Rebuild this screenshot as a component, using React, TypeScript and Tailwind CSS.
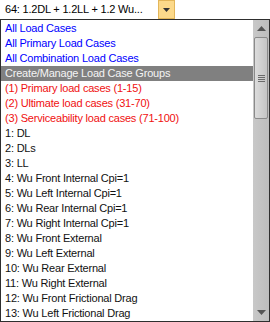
import React from "react";

const rows: { t: string; c: string; sel?: boolean }[] = [
  { t: "All Load Cases", c: "text-[#0000ff]" },
  { t: "All Primary Load Cases", c: "text-[#0000ff]" },
  { t: "All Combination Load Cases", c: "text-[#0000ff]" },
  { t: "Create/Manage Load Case Groups", c: "text-[#f4f4f4]", sel: true },
  { t: "(1) Primary load cases (1-15)", c: "text-[#f01010]" },
  { t: "(2) Ultimate load cases (31-70)", c: "text-[#f01010]" },
  { t: "(3) Serviceability load cases (71-100)", c: "text-[#f01010]" },
  { t: "1: DL", c: "text-[#111]" },
  { t: "2: DLs", c: "text-[#111]" },
  { t: "3: LL", c: "text-[#111]" },
  { t: "4: Wu Front Internal Cpi=1", c: "text-[#111]" },
  { t: "5: Wu Left Internal Cpi=1", c: "text-[#111]" },
  { t: "6: Wu Rear Internal Cpi=1", c: "text-[#111]" },
  { t: "7: Wu Right Internal Cpi=1", c: "text-[#111]" },
  { t: "8: Wu Front External", c: "text-[#111]" },
  { t: "9: Wu Left External", c: "text-[#111]" },
  { t: "10: Wu Rear External", c: "text-[#111]" },
  { t: "11: Wu Right External", c: "text-[#111]" },
  { t: "12: Wu Front Frictional Drag", c: "text-[#111]" },
  { t: "13: Wu Left Frictional Drag", c: "text-[#111]" },
];

export default function App() {
  return (
    <div
      className="w-[270px] h-[322px] bg-white flex flex-col text-[11px] tracking-[-0.2px]"
      style={{ fontFamily: '"Liberation Sans", Arial, sans-serif' }}
    >
      <div className="h-[19px] w-[175px] flex items-stretch">
        <div className="flex-1 flex items-center pl-[5px] text-black">64: 1.2DL + 1.2LL + 1.2 Wu...</div>
        <div className="w-[17px] bg-[#fcd98a] border border-[#e3b65a] flex items-center justify-center">
          <svg width="7" height="4" viewBox="0 0 7 4">
            <polygon points="0,0 7,0 3.5,4" fill="#333" />
          </svg>
        </div>
      </div>
      <div className="flex-1 flex border border-[#2e2e2e] min-h-0">
        <div className="flex-1 flex flex-col pt-[1px] overflow-hidden">
          {rows.map((r) => (
            <div
              key={r.t}
              className={`h-[15px] shrink-0 flex items-center pl-[4px] whitespace-nowrap ${r.c} ${r.sel ? "bg-[#808080]" : ""}`}
            >
              {r.t}
            </div>
          ))}
        </div>
        <div className="w-[16px] flex flex-col items-center bg-gradient-to-r from-[#c8c8c8] to-[#bdbdbd]">
          <div className="h-[17px] flex items-center justify-center">
            <svg width="9" height="5" viewBox="0 0 9 5">
              <polygon points="0,5 9,5 4.5,0" fill="#555" />
            </svg>
          </div>
          <div className="w-[14px] h-[82px] rounded-[2px] border border-[#8a8a8a] bg-gradient-to-r from-[#dcdcdc] to-[#c4c4c4] flex flex-col items-center justify-center gap-[1px]">
            <div className="w-[7px] h-[1px] bg-[#6a6a6a]" />
            <div className="w-[7px] h-[1px] bg-[#6a6a6a]" />
            <div className="w-[7px] h-[1px] bg-[#6a6a6a]" />
            <div className="w-[7px] h-[1px] bg-[#6a6a6a]" />
          </div>
          <div className="flex-1" />
          <div className="h-[17px] flex items-center justify-center">
            <svg width="9" height="5" viewBox="0 0 9 5">
              <polygon points="0,0 9,0 4.5,5" fill="#555" />
            </svg>
          </div>
        </div>
      </div>
    </div>
  );
}
